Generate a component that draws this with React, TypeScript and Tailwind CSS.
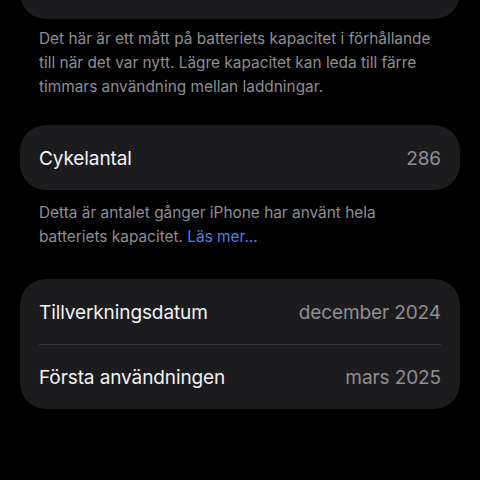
import React from "react";

const FONT = { fontFamily: "Inter, 'Noto Sans', sans-serif" };

type Row = { label: string; value: string };

function Card({ rows, className = "" }: { rows: Row[]; className?: string }) {
  return (
    <div className={`mx-5 rounded-[26px] bg-[#1c1c1e] px-[19px] ${className}`}>
      {rows.map((r, i) => (
        <div
          key={r.label}
          className={`flex h-[65px] items-center justify-between pt-[3px] ${
            i > 0 ? "border-t border-[#38383a]" : ""
          }`}
        >
          <span className="text-[19px] tracking-[-0.1px] text-[#f2f2f7]">{r.label}</span>
          <span className="text-[19px] tracking-[-0.1px] text-[#8e8e93]">{r.value}</span>
        </div>
      ))}
    </div>
  );
}

function Footer({ children, className = "" }: { children: React.ReactNode; className?: string }) {
  return (
    <p className={`pl-[39px] pr-[36px] text-[15.4px] leading-[24px] text-[#8e8e93] ${className}`}>
      {children}
    </p>
  );
}

export default function App() {
  return (
    <div className="h-[480px] w-[480px] overflow-hidden bg-black" style={FONT}>
      {/* scrollad vy: kortet ovanför syns bara i nederkanten */}
      <Card className="mt-[-46px]" rows={[{ label: "Maximal kapacitet", value: "100 %" }]} />
      <Footer className="pt-[8px]">
        Det här är ett mått på batteriets kapacitet i förhållande till när det var nytt. Lägre
        kapacitet kan leda till färre timmars användning mellan laddningar.
      </Footer>
      <Card className="mt-[26px]" rows={[{ label: "Cykelantal", value: "286" }]} />
      <Footer className="pt-[11px]">
        Detta är antalet gånger iPhone har använt hela batteriets kapacitet.{" "}
        <span className="text-[#4a80e0]">Läs mer...</span>
      </Footer>
      <Card
        className="mt-[30px]"
        rows={[
          { label: "Tillverkningsdatum", value: "december 2024" },
          { label: "Första användningen", value: "mars 2025" },
        ]}
      />
    </div>
  );
}
